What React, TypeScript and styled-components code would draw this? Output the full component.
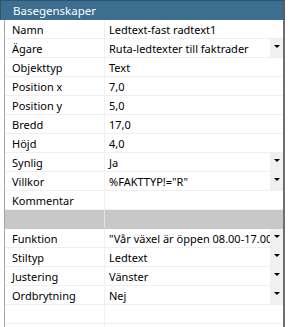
import React from "react";
import styled, { createGlobalStyle } from "styled-components";

const GlobalStyle = createGlobalStyle`
  html, body {
    margin: 0;
    padding: 0;
    background: #fff;
  }
  body {
    font-family: "Noto Sans", "Open Sans", sans-serif;
    font-size: 11px;
    color: #000;
  }
`;

const Panel = styled.div`
  display: flex;
  flex-direction: column;
  width: 285px;
`;

const Header = styled.div`
  display: flex;
  align-items: center;
  box-sizing: border-box;
  height: 20px;
  padding-left: 12px;
  background: #3b6e8f;
  border-top: 1px solid #2c5570;
  border-left: 1px solid #2c5570;
  border-right: 2px solid #5c5c5c;
  color: #fff;
  font-size: 11.5px;
`;

const Body = styled.div`
  display: flex;
  flex-direction: column;
  margin-left: 4px;
  border-left: 1px solid #a6a6a6;
  border-right: 2px solid #6e6e6e;
`;

const Row = styled.div<{ $blank?: boolean }>`
  display: flex;
  height: 19px;
  box-sizing: border-box;
  border-bottom: 1px solid ${(p) => (p.$blank ? "#c8c8c8" : "#f0f0f0")};
  background: ${(p) => (p.$blank ? "#c8c8c8" : "#fff")};
`;

const Label = styled.div<{ $blank?: boolean }>`
  display: flex;
  align-items: center;
  width: 100px;
  padding-left: 7px;
  box-sizing: border-box;
  border-right: 1px solid ${(p) => (p.$blank ? "#e4e4e4" : "#f0f0f0")};
  white-space: nowrap;
  overflow: hidden;
`;

const Value = styled.div`
  display: flex;
  align-items: stretch;
  flex: 1;
  min-width: 0;
`;

const ValueText = styled.div`
  display: flex;
  align-items: center;
  flex: 1;
  min-width: 0;
  padding-left: 4px;
  white-space: nowrap;
  overflow: hidden;
`;

const DropButton = styled.div`
  display: flex;
  justify-content: center;
  width: 13px;
  background: #f0f0f0;
  padding-top: 6px;
  box-sizing: border-box;
`;

const Arrow = styled.div`
  width: 0;
  height: 0;
  border-left: 3px solid transparent;
  border-right: 3px solid transparent;
  border-top: 3px solid #000;
`;

type Prop = { label: string; value: string; drop?: boolean; blank?: boolean };

const props: Prop[] = [
  { label: "Namn", value: "Ledtext-fast radtext1" },
  { label: "Ägare", value: "Ruta-ledtexter till faktrader", drop: true },
  { label: "Objekttyp", value: "Text" },
  { label: "Position x", value: "7,0" },
  { label: "Position y", value: "5,0" },
  { label: "Bredd", value: "17,0" },
  { label: "Höjd", value: "4,0" },
  { label: "Synlig", value: "Ja", drop: true },
  { label: "Villkor", value: '%FAKTTYP!="R"', drop: true },
  { label: "Kommentar", value: "" },
  { label: "", value: "", blank: true },
  { label: "Funktion", value: '"Vår växel är öppen 08.00-17.00"', drop: true },
  { label: "Stiltyp", value: "Ledtext", drop: true },
  { label: "Justering", value: "Vänster", drop: true },
  { label: "Ordbrytning", value: "Nej", drop: true },
  { label: "", value: "" },
  { label: "", value: "" },
];

function App() {
  return (
    <>
      <GlobalStyle />
      <Panel>
        <Header>Basegenskaper</Header>
        <Body>
          {props.map((p, i) => (
            <Row key={i} $blank={p.blank}>
              <Label $blank={p.blank}>{p.label}</Label>
              <Value>
                <ValueText>{p.value}</ValueText>
                {p.drop && (
                  <DropButton>
                    <Arrow />
                  </DropButton>
                )}
              </Value>
            </Row>
          ))}
        </Body>
      </Panel>
    </>
  );
}

export default App;
